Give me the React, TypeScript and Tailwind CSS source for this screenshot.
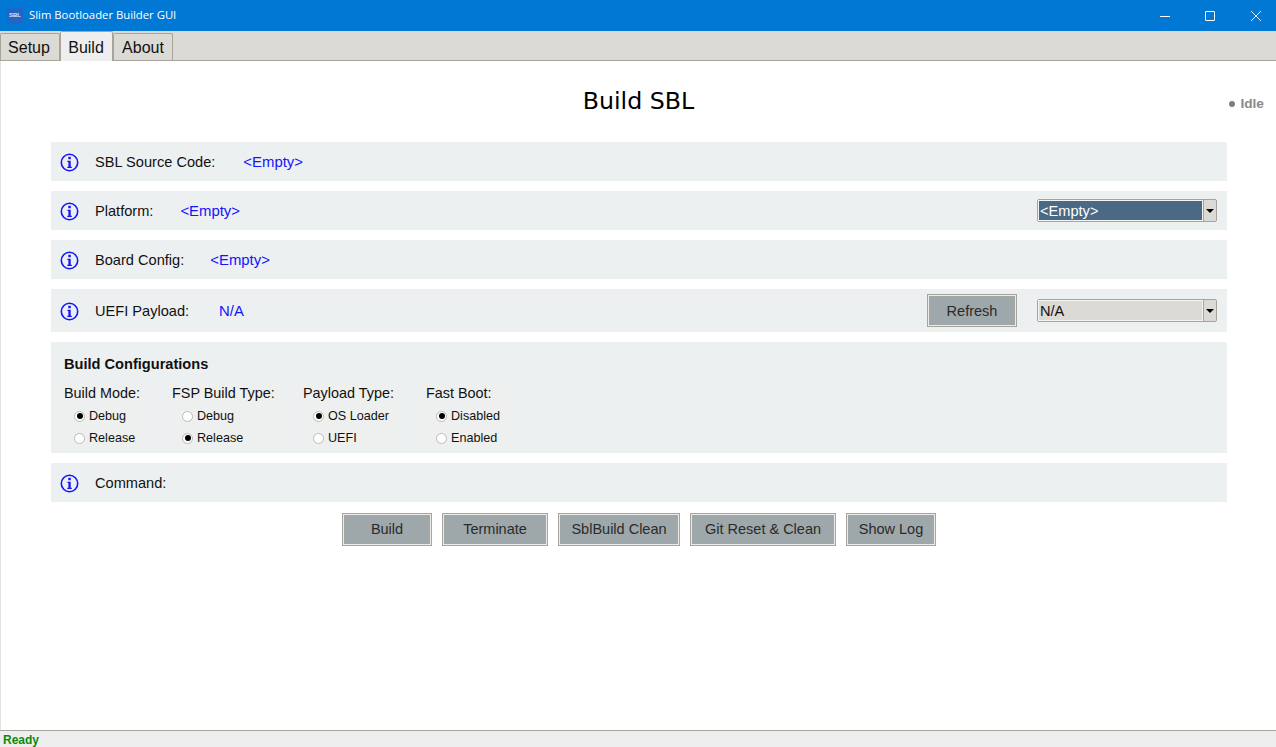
const sans = "font-['Liberation_Sans',Arial,sans-serif]";

function InfoIcon() {
  return (
    <svg className="mt-[1px] size-[19px] shrink-0" viewBox="0 0 19 19" fill="none">
      <circle cx="9.5" cy="9.5" r="8.2" stroke="#1414ff" strokeWidth="1.6" />
      <rect x="8.3" y="3.8" width="2.5" height="2.4" fill="#1414ff" />
      <path d="M7.4 7.8h3.3v6h1.1v1.2H7.3v-1.2h1.1V9H7.4z" fill="#1414ff" />
    </svg>
  );
}

function Row({ label, value, valueClass, height = 'h-[39px]', children }: {
  label: string;
  value?: string;
  valueClass?: string;
  height?: string;
  children?: React.ReactNode;
}) {
  return (
    <div className={`flex ${height} items-center bg-[#ecf0f1] pl-[9px] pr-[10px]`}>
      <InfoIcon />
      <span className="ml-[16px] pt-[2px] text-[14.6px] text-[#111]">{label}</span>
      {value && <span className={`${valueClass} pt-[2px] text-[14.9px] text-[#1414ff]`}>{value}</span>}
      {children}
    </div>
  );
}

function Combo({ value, selected }: { value: string; selected?: boolean }) {
  return (
    <div className="flex h-[23px] w-[180px] items-stretch rounded-[2px] border border-[#a8a49c] bg-[#dcdad5]">
      <div className={`flex-1 border border-[#f4f4f2] pl-[1px] pt-[1px] text-[14.6px] leading-[19px] ${selected ? 'bg-[#4a6984] text-white' : 'bg-[#dcdad5] text-[#111]'}`}>
        {value}
      </div>
      <div className="flex w-[13px] items-center justify-center border-l border-[#a8a49c]">
        <div className="size-0 border-x-[4px] border-t-[4px] border-x-transparent border-t-black" />
      </div>
    </div>
  );
}

function ActionButton({ label, width, className = '' }: { label: string; width: string; className?: string }) {
  return (
    <div className={`flex h-[33px] ${width} ${className} items-center justify-center border border-[#a8a49c] bg-[#9ea7aa] text-[14.5px] text-[#2b2b2b] shadow-[inset_0_0_0_1px_#ecebe8]`}>
      {label}
    </div>
  );
}

function Radio({ label, checked }: { label: string; checked?: boolean }) {
  return (
    <div className="flex h-[22px] items-center gap-[4px] pl-[10px] text-[12.6px] text-[#111]">
      <div className="flex size-[11px] items-center justify-center rounded-full border border-[#bdbab3] bg-white">
        {checked && <div className="size-[6px] rounded-full bg-black" />}
      </div>
      {label}
    </div>
  );
}

function RadioGroup({ title, className, options, picked }: { title: string; className: string; options: string[]; picked: number }) {
  return (
    <div className={`${className} bg-[#eeefef]`}>
      <div className="mb-[2px] h-[20px] text-[14.4px] leading-[20px] text-[#111]">{title}</div>
      {options.map((o, i) => (
        <Radio key={o} label={o} checked={i === picked} />
      ))}
    </div>
  );
}

export default function App() {
  return (
    <div className={`${sans} flex h-[747px] w-[1276px] flex-col overflow-hidden bg-white`}>
      {/* title bar */}
      <div className="flex h-[31px] items-center bg-[#0078d4] pl-[7px] text-white">
        <div className="flex size-[16px] items-center justify-center bg-[#1f66c9] text-[6px] font-bold text-[#dfe9fa]">SBL</div>
        <span className="ml-[6px] font-['Open_Sans',sans-serif] text-[11.3px]">Slim Bootloader Builder GUI</span>
        <div className="ml-auto flex items-center">
          <svg className="mr-[35px] size-[10px]" viewBox="0 0 10 10" stroke="white" strokeWidth="1">
            <path d="M0 5.5h10" />
          </svg>
          <div className="mr-[36px] size-[10px] rounded-[1px] border border-white" />
          <svg className="mr-[15px] size-[10px]" viewBox="0 0 10 10" stroke="white" strokeWidth="0.9" fill="none">
            <path d="M0 0l10 10M10 0L0 10" />
          </svg>
        </div>
      </div>

      {/* tabs */}
      <div className="flex h-[30px] items-end border-b border-[#a8a49c] bg-[#dcdad5] text-[16px] text-[#111]">
        <div className="flex h-[27px] w-[60px] items-center justify-center rounded-t-[2px] border border-b-0 border-[#a8a49c] pr-[2px] pt-[2px]">Setup</div>
        <div className="-mb-px flex h-[30px] w-[53px] items-center justify-center rounded-t-[2px] border border-b-0 border-[#a8a49c] bg-[#eeeeee] pr-[1px] pt-[2px]">Build</div>
        <div className="flex h-[27px] w-[60px] items-center justify-center rounded-t-[2px] border border-b-0 border-[#a8a49c] pt-[2px]">About</div>
      </div>

      {/* page */}
      <div className="flex min-h-0 flex-1 flex-col border-l border-[#e4e2dc]">
        <div className="grid h-[81px] grid-cols-[1fr_auto_1fr] items-center">
          <div />
          <h1 className="pt-[1px] font-['DejaVu_Sans',sans-serif] text-[23.7px] text-black">Build SBL</h1>
          <div className="flex items-center justify-end gap-[5px] pr-[12px] pt-[6px] text-[13.7px] font-bold text-[#8a8a8a]">
            <div className="size-[6px] rounded-full bg-[#7f7f7f]" />
            Idle
          </div>
        </div>

        <div className="ml-[50px] flex w-[1176px] flex-col gap-[10px]">
          <Row label="SBL Source Code:" value="<Empty>" valueClass="ml-[28px]" />
          <Row label="Platform:" value="<Empty>" valueClass="ml-[27px]">
            <div className="ml-auto"><Combo value="<Empty>" selected /></div>
          </Row>
          <Row label="Board Config:" value="<Empty>" valueClass="ml-[26px]" />
          <Row label="UEFI Payload:" value="N/A" valueClass="ml-[30px]" height="h-[43px]">
            <ActionButton label="Refresh" width="w-[90px]" className="ml-auto pt-[2px]" />
            <div className="ml-[20px]"><Combo value="N/A" /></div>
          </Row>

          <div className="h-[111px] bg-[#ecf0f1] pl-[9px] pt-[13px]">
            <div className="h-[18px] pl-[4px] text-[14.6px] font-bold leading-[18px] text-[#111]">Build Configurations</div>
            <div className="mt-[10px] flex">
              <RadioGroup title="Build Mode:" className="w-[90px] pl-[4px]" options={['Debug', 'Release']} picked={0} />
              <RadioGroup title="FSP Build Type:" className="ml-[20px] w-[113px] pl-[2px]" options={['Debug', 'Release']} picked={1} />
              <RadioGroup title="Payload Type:" className="ml-[17px] w-[102px] pl-[3px]" options={['OS Loader', 'UEFI']} picked={0} />
              <RadioGroup title="Fast Boot:" className="ml-[21px] w-[90px] pl-[3px]" options={['Disabled', 'Enabled']} picked={0} />
            </div>
          </div>

          <Row label="Command:" />

          <div className="mt-px flex justify-center gap-[10px]">
            <ActionButton label="Build" width="w-[90px]" />
            <ActionButton label="Terminate" width="w-[106px]" />
            <ActionButton label="SblBuild Clean" width="w-[122px]" />
            <ActionButton label="Git Reset & Clean" width="w-[146px]" />
            <ActionButton label="Show Log" width="w-[90px]" />
          </div>
        </div>
      </div>

      {/* status bar */}
      <div className="flex h-[17px] items-center border-t border-[#a8a49c] bg-[#eeeeee] pl-[3px] pt-[2px] text-[12px] font-bold text-[#0a8a0a]">Ready</div>
    </div>
  );
}
